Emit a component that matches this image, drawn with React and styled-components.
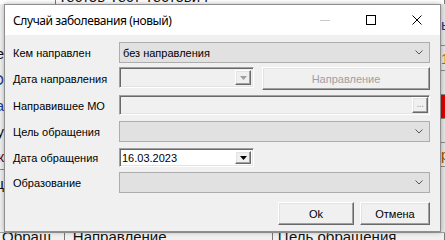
import React from "react";
import styled, { createGlobalStyle } from "styled-components";

const Global = createGlobalStyle`
  html, body { margin: 0; padding: 0; }
  body { background: #f0f0f0; }
`;

const Root = styled.div`
  position: relative;
  width: 445px;
  height: 240px;
  overflow: hidden;
  background: #f0f0f0;
  font-family: "Liberation Sans", Arial, sans-serif;
  font-size: 11px;
  color: #000;
`;

/* ---------- window behind the dialog ---------- */
const Back = styled.div`
  display: grid;
  grid-template-rows: 4px 1fr 8px;
  height: 100%;
`;
const BackRow = styled.div`
  display: flex;
  overflow: hidden;
  background: ${(p) => p.bg || "#f0f0f0"};
  border-top: ${(p) => (p.lined ? "1px solid #a0a0a0" : "none")};
`;
const BackCell = styled.div`
  flex: ${(p) => (p.w ? `0 0 ${p.w}px` : "1")};
  border-right: 1px solid #7a7a7a;
  padding-left: ${(p) => p.pad || 2}px;
  font-size: 15px;
  line-height: 15px;
  white-space: nowrap;
  margin-top: ${(p) => p.shift || 0}px;
  color: #111;
`;
const BackMiddle = styled.div`
  display: flex;
  justify-content: space-between;
`;
const SideCol = styled.div`
  width: 4px;
  overflow: hidden;
  display: flex;
  flex-direction: column;
  padding-top: ${(p) => p.top}px;
  background: ${(p) => p.bg || "#f0f0f0"};
`;
const SideCell = styled.div`
  flex: 0 0 ${(p) => p.h}px;
  display: flex;
  align-items: center;
  justify-content: ${(p) => (p.right ? "flex-end" : "flex-start")};
  white-space: nowrap;
  font-size: 15px;
  color: ${(p) => p.color || "#111"};
  background: ${(p) => p.bg || "transparent"};
  border-bottom: ${(p) => (p.line ? "1px solid #8a8a8a" : "none")};
  box-sizing: border-box;
`;

/* ---------- dialog ---------- */
const Dialog = styled.div`
  position: absolute;
  left: 4px;
  top: 4px;
  width: 437px;
  height: 228px;
  box-sizing: border-box;
  border: 1px solid #8e8e8e;
  box-shadow: 0 0 5px rgba(0, 0, 0, 0.3);
  background: #f0f0f0;
  display: flex;
  flex-direction: column;
`;
const TitleBar = styled.div`
  height: 30px;
  flex: 0 0 30px;
  background: #fff;
  display: flex;
  align-items: center;
  padding-left: 8px;
`;
const Title = styled.div`
  font-family: "Noto Sans", "Open Sans", sans-serif;
  font-size: 12px;
  letter-spacing: -0.4px;
  color: #000;
`;
const Caption = styled.div`
  margin-left: auto;
  display: flex;
  height: 100%;
`;
const CaptionBtn = styled.div`
  width: 46px;
  height: 100%;
  display: flex;
  align-items: center;
  justify-content: center;
`;

const Body = styled.div`
  flex: 1;
  padding: 7px 10px 0 8px;
  display: flex;
  flex-direction: column;
`;
const FieldRow = styled.div`
  display: grid;
  grid-template-columns: 106px 1fr;
  align-items: center;
  height: ${(p) => p.h}px;
  margin-top: ${(p) => p.mt || 0}px;
`;
const Label = styled.div`
  padding-top: 1px;
  white-space: nowrap;
`;
const Controls = styled.div`
  display: flex;
  gap: 8px;
  height: 100%;
  align-items: flex-start;
`;

const Combo = styled.div`
  box-sizing: border-box;
  height: 100%;
  width: 100%;
  border: 1px solid #adadad;
  background: #e1e1e1;
  display: flex;
  align-items: center;
  padding-left: 3px;
  padding-right: 6px;
`;
const ComboText = styled.div`
  flex: 1;
`;

const sunken = `
  box-sizing: border-box;
  border: 1px solid;
  border-color: #a0a0a0 #ffffff #ffffff #a0a0a0;
  box-shadow: inset 1px 1px #696969, inset -1px -1px #e3e3e3;
`;
const raised = `
  box-sizing: border-box;
  border: 1px solid;
  border-color: #ffffff #696969 #696969 #ffffff;
  box-shadow: inset -1px -1px #a0a0a0, inset 1px 1px #e3e3e3;
  background: #f0f0f0;
`;

const DateBox = styled.div`
  ${sunken};
  width: 135px;
  height: ${(p) => p.h}px;
  background: ${(p) => (p.disabled ? "#f0f0f0" : "#fff")};
  display: flex;
  align-items: center;
  padding: 2px;
`;
const DateText = styled.div`
  flex: 1;
  font-size: 11px;
`;
const DropBtn = styled.div`
  ${raised};
  width: 16px;
  height: 100%;
  display: flex;
  align-items: center;
  justify-content: center;
`;

const PushBtn = styled.div`
  ${raised};
  flex: ${(p) => (p.w ? `0 0 ${p.w}px` : "1")};
  height: ${(p) => p.h || 23}px;
  display: flex;
  align-items: center;
  justify-content: center;
  color: ${(p) => (p.disabled ? "#a0a0a0" : "#000")};
`;

const TextBox = styled.div`
  ${sunken};
  width: 100%;
  margin-right: 2px;
  height: 100%;
  background: #f0f0f0;
  display: flex;
  justify-content: flex-end;
  align-items: center;
  padding: 1px 1px 1px 2px;
`;
const EllipsisBtn = styled.div`
  ${raised};
  width: 16px;
  height: 16px;
  display: flex;
  align-items: flex-end;
  justify-content: center;
  color: #a0a0a0;
  font-size: 10px;
  line-height: 10px;
  padding-bottom: 3px;
  letter-spacing: -0.5px;
`;

const Footer = styled.div`
  display: flex;
  justify-content: flex-end;
  gap: 6px;
  margin-top: 9px;
`;

const Chevron = () => (
  <svg width="8" height="5" viewBox="0 0 8 5">
    <polyline points="0.5,0.5 4,4 7.5,0.5" fill="none" stroke="#555" strokeWidth="1" />
  </svg>
);

const Triangle = ({ color }) => (
  <svg width="7" height="4" viewBox="0 0 7 4">
    <polygon points="0,0 7,0 3.5,4" fill={color} />
  </svg>
);

const DatePicker = ({ value, disabled, h }) => (
  <DateBox disabled={disabled} h={h}>
    <DateText>{value}</DateText>
    <DropBtn>
      <Triangle color={disabled ? "#a0a0a0" : "#000"} />
    </DropBtn>
  </DateBox>
);

const Select = ({ value }) => (
  <Combo>
    <ComboText>{value}</ComboText>
    <Chevron />
  </Combo>
);

const rightRows = [
  { h: 42, line: true, t: "ь", color: "#1a3a8a" },
  { h: 25, line: true, t: "1", color: "#c06000" },
  { h: 24, line: true },
  { h: 24, line: true, bg: "#e00000" },
  { h: 24, line: true },
  { h: 24, line: true, t: "р", color: "#a05000" },
  { h: 30 },
];

const leftRows = [
  { h: 26, t: "ие" },
  { h: 26, t: "ЛПО", color: "#1a3a9a" },
  { h: 26, t: "Дата", color: "#1a3a9a" },
  { h: 26, t: "статусу" },
  { h: 26, t: "к", color: "#6a0000", line: true },
  { h: 26, t: "Обращ" },
];

export default function App() {
  return (
    <Root>
      <Global />
      <Back>
        <BackRow bg="#ffffff">
          <BackCell w={53} shift={-11} />
          <BackCell pad={2} shift={-11}>
            Тестов Тест Тестович
          </BackCell>
        </BackRow>
        <BackMiddle>
          <SideCol top={36}>
            {leftRows.map((r, i) => (
              <SideCell key={i} h={r.h} right color={r.color} line={r.line}>
                {r.t}
              </SideCell>
            ))}
          </SideCol>
          <SideCol top={0} bg="#e6e6e6">
            {rightRows.map((r, i) => (
              <SideCell key={i} h={r.h} color={r.color} bg={r.bg} line={r.line}>
                {r.t}
              </SideCell>
            ))}
          </SideCol>
        </BackMiddle>
        <BackRow lined>
          <BackCell w={53} shift={-4}>
            Обращ...
          </BackCell>
          <BackCell w={199} pad={8} shift={-4}>
            Направление
          </BackCell>
          <BackCell pad={5} shift={-4}>
            Цель обращения
          </BackCell>
        </BackRow>
      </Back>

      <Dialog>
        <TitleBar>
          <Title>Случай заболевания (новый)</Title>
          <Caption>
            <CaptionBtn>
              <svg width="10" height="1" viewBox="0 0 10 1">
                <rect width="10" height="1" fill="#c8c8c8" />
              </svg>
            </CaptionBtn>
            <CaptionBtn>
              <svg width="10" height="10" viewBox="0 0 10 10">
                <rect x="0.5" y="0.5" width="9" height="9" fill="none" stroke="#000" />
              </svg>
            </CaptionBtn>
            <CaptionBtn>
              <svg width="10" height="10" viewBox="0 0 10 10">
                <path d="M0.5 0.5 L9.5 9.5 M9.5 0.5 L0.5 9.5" stroke="#000" strokeWidth="1" />
              </svg>
            </CaptionBtn>
          </Caption>
        </TitleBar>

        <Body>
          <FieldRow h={21}>
            <Label>Кем направлен</Label>
            <Select value="без направления" />
          </FieldRow>
          <FieldRow h={23} mt={4}>
            <Label>Дата направления</Label>
            <Controls>
              <DatePicker disabled h={21} />
              <PushBtn disabled>Направление</PushBtn>
            </Controls>
          </FieldRow>
          <FieldRow h={19} mt={5}>
            <Label>Направившее МО</Label>
            <TextBox>
              <EllipsisBtn>...</EllipsisBtn>
            </TextBox>
          </FieldRow>
          <FieldRow h={21} mt={7}>
            <Label>Цель обращения</Label>
            <Select />
          </FieldRow>
          <FieldRow h={19} mt={6}>
            <Label>Дата обращения</Label>
            <Controls>
              <DatePicker value="16.03.2023" h={19} />
            </Controls>
          </FieldRow>
          <FieldRow h={21} mt={5}>
            <Label>Образование</Label>
            <Select />
          </FieldRow>
          <Footer>
            <PushBtn w={76}>Ok</PushBtn>
            <PushBtn w={70}>Отмена</PushBtn>
          </Footer>
        </Body>
      </Dialog>
    </Root>
  );
}
